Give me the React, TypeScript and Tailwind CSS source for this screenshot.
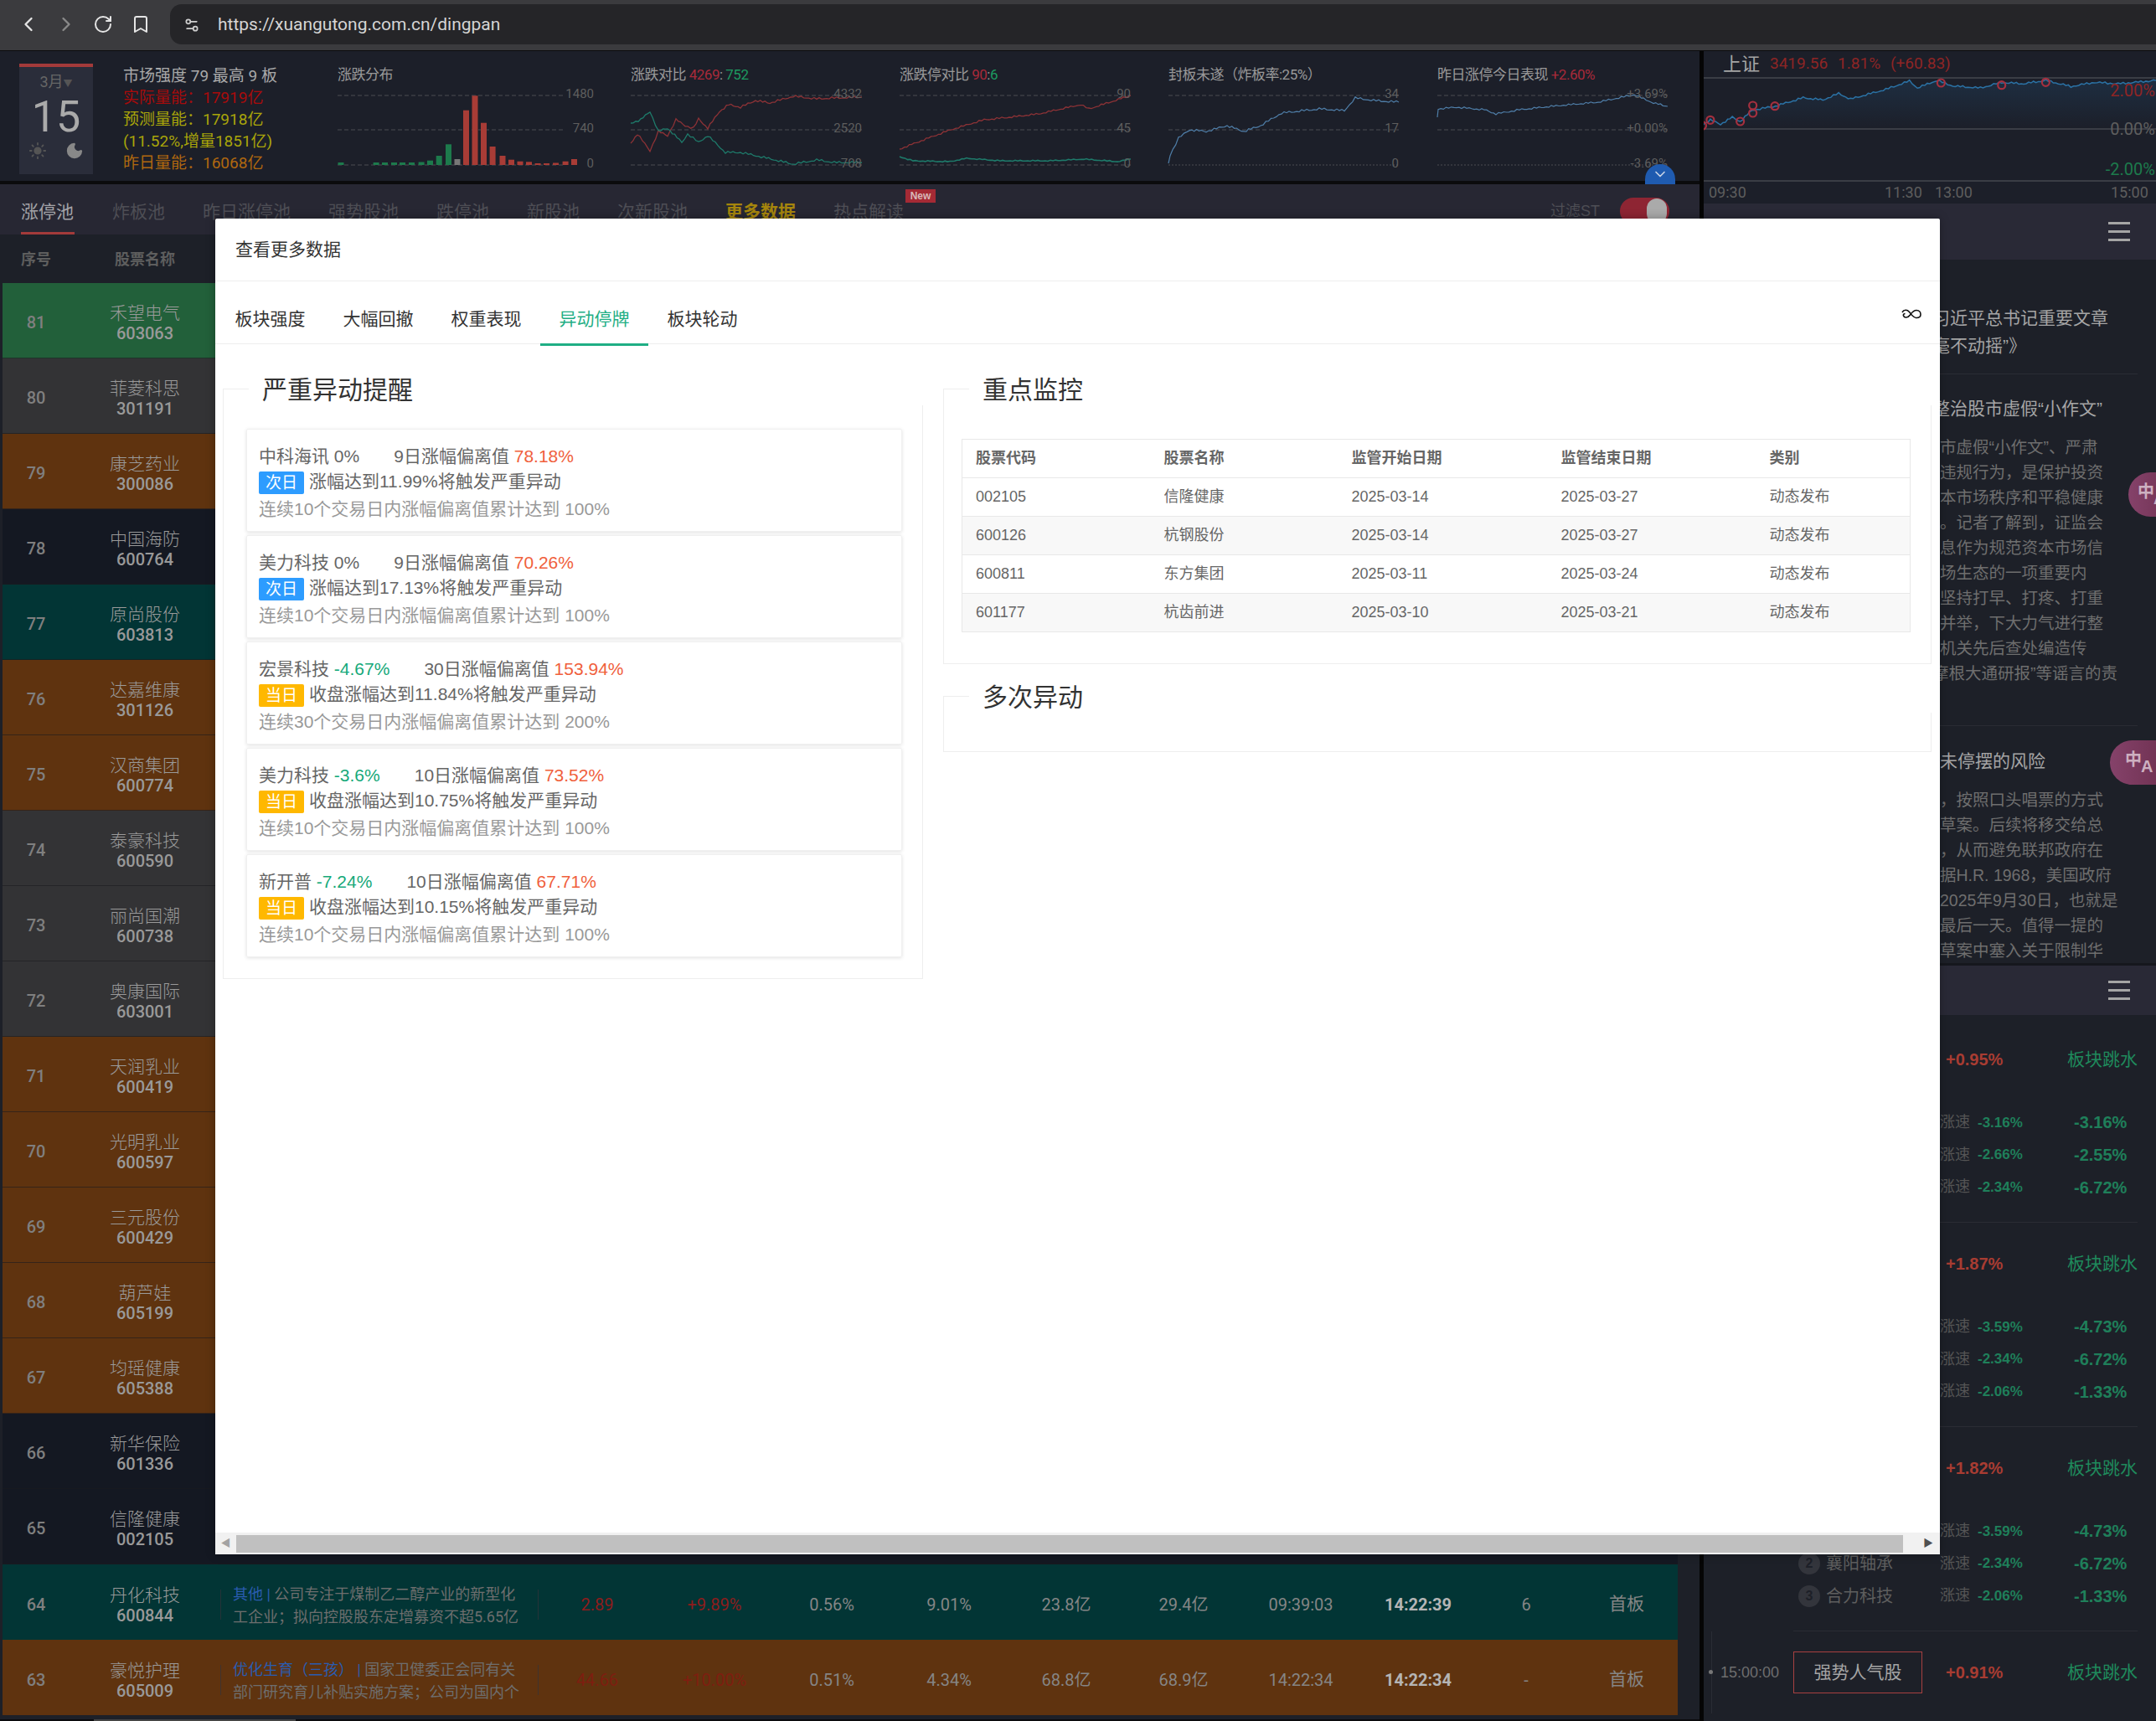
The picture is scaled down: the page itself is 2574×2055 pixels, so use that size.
import { ChevronLeft, ChevronRight, RotateCw, Bookmark, Settings2, Sun, Moon, ChevronDown } from 'lucide-react'

// page font: latin first, then CJK
const sans = "font-['Liberation_Sans','Noto_Sans_CJK_SC',sans-serif]"
const din = "font-['Roboto','Noto_Sans_CJK_SC',sans-serif]"

const rowBg: Record<string, string> = {
  green: 'bg-[#22603a]',
  grey: 'bg-[#333335]',
  brown: 'bg-[#5f330f]',
  navy: 'bg-[#141822]',
  teal: 'bg-[#023535]',
}

const stocks = [
  [81, '禾望电气', '603063', 'green'],
  [80, '菲菱科思', '301191', 'grey'],
  [79, '康芝药业', '300086', 'brown'],
  [78, '中国海防', '600764', 'navy'],
  [77, '原尚股份', '603813', 'teal'],
  [76, '达嘉维康', '301126', 'brown'],
  [75, '汉商集团', '600774', 'brown'],
  [74, '泰豪科技', '600590', 'grey'],
  [73, '丽尚国潮', '600738', 'grey'],
  [72, '奥康国际', '603001', 'grey'],
  [71, '天润乳业', '600419', 'brown'],
  [70, '光明乳业', '600597', 'brown'],
  [69, '三元股份', '600429', 'brown'],
  [68, '葫芦娃', '605199', 'brown'],
  [67, '均瑶健康', '605388', 'brown'],
  [66, '新华保险', '601336', 'navy'],
  [65, '信隆健康', '002105', 'navy'],
] as const

// turn a few hand read points into a jagged intraday line
function jag(pts: number[][], amp = 1.2) {
  const out: string[] = []
  let n = 0
  for (let i = 0; i < pts.length - 1; i++) {
    const [x0, y0] = pts[i]
    const [x1, y1] = pts[i + 1]
    const steps = Math.max(1, Math.round((x1 - x0) / 3))
    for (let s = 0; s < steps; s++) {
      const t = s / steps
      const noise = Math.sin(n * 2.7) * amp + Math.sin(n * 0.9) * amp * 0.6
      out.push(`${(x0 + (x1 - x0) * t).toFixed(1)},${(y0 + (y1 - y0) * t + noise).toFixed(1)}`)
      n++
    }
  }
  const last = pts[pts.length - 1]
  out.push(`${last[0]},${last[1]}`)
  return out.join(' ')
}

const bars: [number, number, string][] = [
  [0.5, 94, '#1d7a4c'], [42.6, 94, '#1d7a4c'], [53, 94, '#1d7a4c'], [64, 94, '#1d7a4c'], [74, 94, '#1d7a4c'], [85, 94, '#1d7a4c'],
  [96.6, 93.5, '#1d7a4c'], [107, 91.7, '#1d7a4c'], [117.7, 86, '#1d7a4c'], [129, 72.3, '#1d7a4c'], [139.5, 90, '#777'],
  [150, 31.7, '#a83c36'], [160.5, 14.3, '#a83c36'], [171, 46.7, '#a83c36'], [181.6, 75, '#a83c36'], [193.5, 86, '#a83c36'],
  [204, 90.7, '#a83c36'], [214.5, 92.7, '#a83c36'], [225, 93.3, '#a83c36'], [235.6, 95, '#a83c36'], [246, 95, '#a83c36'],
  [257, 94.5, '#a83c36'], [268.6, 92.7, '#a83c36'], [279, 90, '#a83c36'],
]

function Chart({ width, title, labels, labelEnd, dashEnd, bottomDots, children }: {
  width: number
  title: React.ReactNode
  labels: string[]
  labelEnd: number
  dashEnd: number
  bottomDots?: boolean
  children: React.ReactNode
}) {
  const ys = [14, 55, 97]
  return (
    <div className="shrink-0" style={{ width }}>
      <div className="h-[22px] text-[17px] leading-[22px] tracking-[-0.5px] text-[#999] whitespace-nowrap">{title}</div>
      <svg width={width} height={108} className="block overflow-visible">
        {ys.map((y, i) => (
          <line key={y} x1={0} x2={dashEnd} y1={y} y2={y} stroke="#4a4c52" strokeDasharray={bottomDots && i === 2 ? '2 2' : '5 3'} />
        ))}
        {children}
        {labels.map((l, i) => (
          <text key={l} x={labelEnd} y={ys[i] + 3} textAnchor="end" fontSize={15} fill="#5e5e5e" fontFamily="Roboto, sans-serif">{l}</text>
        ))}
      </svg>
    </div>
  )
}

function Header() {
  return (
    <div className={`h-[155px] bg-[#1c1f29] flex pl-[23px] ${din}`}>
      <div className="w-[88px] h-[132px] mt-[15px] border-t-4 border-[#a33a3a] bg-[#2a2d3a] flex flex-col items-center shrink-0">
        <div className="mt-[6px] text-[18px] leading-[24px] text-[#666]">3月<span className="text-[11px] text-[#555]">▼</span></div>
        <div className="text-[52px] leading-[54px] text-[#aaa]">15</div>
        <div className="mt-[2px] flex gap-[22px] items-center">
          <Sun size={22} className="text-[#555] fill-[#555]" />
          <Moon size={22} className="text-[#888] fill-[#888]" />
        </div>
      </div>
      <div className="ml-[36px] w-[220px] shrink-0 pt-[17px] text-[19px] leading-[26px] whitespace-nowrap mr-[36px]">
        <div className="text-[#a9a9a9]">市场强度 79 最高 9 板</div>
        <div className="text-[#a80b0b]">实际量能：17919亿</div>
        <div className="text-[#a9a50a]">预测量能：17918亿</div>
        <div className="text-[#a9a50a]">(11.52%,增量1851亿)</div>
        <div className="text-[#b0680f]">昨日量能：16068亿</div>
      </div>
      <div className="flex pt-[17px]">
        <Chart width={350} title="涨跌分布" labels={['1480', '740', '0']} labelEnd={306} dashEnd={272}>
          {bars.map(([x, top, c]) => (
            <rect key={x} x={x} y={top} width={7} height={97 - top} fill={c} />
          ))}
        </Chart>
        <Chart
          width={321}
          title={<>涨跌对比 <span className="text-[#a82a3a]">4269</span>: <span className="text-[#1d9a60]">752</span></>}
          labels={['4332', '2520', '708']}
          labelEnd={276}
          dashEnd={276}
        >
          <polyline fill="none" stroke="#8c3236" strokeWidth={1.3} points={jag([[0, 71], [8, 60], [23, 80], [33, 57], [44, 62], [54, 43], [65, 50], [75, 53], [81, 42], [92, 53], [106, 33], [117, 25], [131, 28], [149, 20], [166, 23], [194, 15], [222, 18], [243, 17], [276, 16]], 1)} />
          <polyline fill="none" stroke="#1e7a6a" strokeWidth={1.3} points={jag([[0, 47], [12, 43], [23, 33], [33, 57], [44, 53], [61, 70], [68, 60], [81, 70], [92, 62], [113, 82], [131, 82], [159, 88], [194, 96], [222, 91], [243, 94], [276, 94]], 1)} />
        </Chart>
        <Chart
          width={321}
          title={<>涨跌停对比 <span className="text-[#a82a3a]">90</span>:<span className="text-[#1d9a60]">6</span></>}
          labels={['90', '45', '0']}
          labelEnd={276}
          dashEnd={276}
        >
          <polyline fill="none" stroke="#8c3236" strokeWidth={1.3} points={jag([[0, 78], [26, 68], [61, 55], [101, 43], [131, 40], [166, 36], [216, 25], [226, 30], [276, 14]], 0.8)} />
          <polyline fill="none" stroke="#1e7a6a" strokeWidth={1.6} points={jag([[0, 87], [16, 92], [60, 93], [80, 89], [120, 92], [180, 92], [220, 90], [260, 93], [276, 90]], 0.5)} />
        </Chart>
        <Chart width={321} title="封板未遂（炸板率:25%）" labels={['34', '17', '0']} labelEnd={275} dashEnd={275} bottomDots>
          <polyline fill="none" stroke="#4f7ea8" strokeWidth={1.2} points={jag([[0, 95], [2, 85], [12, 65], [25, 55], [45, 57], [70, 50], [90, 57], [110, 50], [135, 35], [180, 30], [210, 32], [223, 17], [245, 20], [275, 22]], 1)} />
        </Chart>
        <Chart
          width={275}
          title={<>昨日涨停今日表现 <span className="text-[#a82a3a]">+2.60%</span></>}
          labels={['+3.69%', '+0.00%', '-3.69%']}
          labelEnd={275}
          dashEnd={275}
          bottomDots
        >
          <polyline fill="none" stroke="#4f7ea8" strokeWidth={1.2} points={jag([[0, 40], [1, 30], [23, 28], [56, 31], [70, 36], [98, 31], [136, 27], [192, 22], [235, 13], [258, 23], [275, 27]], 0.8)} />
        </Chart>
      </div>
    </div>
  )
}

function NavTabs() {
  return (
    <div className={`h-[60px] bg-[#272733] relative flex items-start pl-[25px] pt-[17px] gap-[45px] text-[21px] leading-[32px] text-[#4e4e55] whitespace-nowrap ${sans}`}>
      <div className="text-[#a3a3a8] relative w-[64px]">
        涨停池
        <div className="absolute left-0 w-[64px] h-[3px] top-[40px] bg-[#a33a3a]" />
      </div>
      <div>炸板池</div>
      <div>昨日涨停池</div>
      <div>强势股池</div>
      <div>跌停池</div>
      <div>新股池</div>
      <div>次新股池</div>
      <div className="font-bold text-[#a5850c]">更多数据</div>
      <div className="relative">
        热点解读
        <span className="absolute left-[86px] top-[-11px] w-[36px] h-[16px] bg-[#a52a35] text-[12px] leading-[16px] text-center font-bold text-[#d8b8b8]">New</span>
      </div>
      <div className="ml-auto mr-[36px] flex items-center gap-[24px] -mt-[15px] pt-[14px]">
        <span className="text-[18px] text-[#4e4e55]">过滤ST</span>
        <span className="w-[59px] h-[32px] rounded-full bg-[#8e2533] flex items-center justify-end pr-[3px]">
          <span className="w-[24px] h-[30px] rounded-full bg-[#aaa]" />
        </span>
      </div>
      <div className="absolute left-[1964px] top-[-24px] w-[36px] h-[24px] rounded-t-full bg-[#1f5bb0] flex items-center justify-center">
        <ChevronDown size={20} className="text-[#c9d4e6]" />
      </div>
    </div>
  )
}

function NameCell({ name, code }: { name: string; code: string }) {
  return (
    <div className="w-[180px] text-center">
      <div className="text-[21px] leading-[26px] text-[#9a9a9a] font-['Noto_Sans_CJK_SC',sans-serif] font-light">{name}</div>
      <div className="text-[20px] leading-[26px] font-medium text-[#999]">{code}</div>
    </div>
  )
}

function ExtraRow({ num, name, code, bg, tag, desc, desc2, cells, priceClass }: {
  num: number
  name: string
  code: string
  bg: string
  tag: string
  desc: string
  desc2: string
  cells: string[]
  priceClass: string
}) {
  return (
    <div className={`h-[90px] pt-[5px] ${bg} flex items-center whitespace-nowrap text-[#858585] text-[20px] ${din}`}>
      <div className="w-[80px] text-center font-medium text-[#7f7f7f]">{num}</div>
      <NameCell name={name} code={code} />
      <div className="w-[380px] h-[36px] border-x border-[#33333a]/70 relative">
        <div className="absolute left-[14px] top-[-8px] text-[18px] leading-[27px] text-[#6e6e6e]">
          <div><span className="text-[#2a5cb0]">{tag} | </span>{desc}</div>
          <div>{desc2}</div>
        </div>
      </div>
      {cells.map((c, i) => (
        <div
          key={i}
          className={
            (i === 8 ? 'w-[118px]' : i === 9 ? 'w-[122px]' : 'w-[140px]') +
            ' text-center ' +
            (i < 2 ? priceClass : i === 7 ? 'font-bold text-[#b5b5b5]' : i === 9 ? 'text-[21px]' : '')
          }
        >
          {c}
        </div>
      ))}
    </div>
  )
}

function MainColumn() {
  return (
    <div className="w-[2029px] shrink-0 flex flex-col bg-[#1d2028]">
      <Header />
      <div className="h-[4px] bg-[#0b0b0d]" />
      <NavTabs />
      <div className={`h-[58px] pt-[3px] bg-[#1d2028] flex items-center pl-[3px] text-[18px] font-bold text-[#5e5e5e] ${sans}`}>
        <div className="w-[80px] pl-[22px]">序号</div>
        <div className="w-[180px] text-center">股票名称</div>
      </div>
      <div className="pl-[3px] w-[2003px]">
        {stocks.map(([num, name, code, color]) => (
          <div key={num} className={`h-[90px] pt-[5px] ${rowBg[color]} flex items-center border-b border-[#1b1b1e]/60 ${din}`}>
            <div className="w-[80px] text-center text-[20px] font-medium text-[#7f7f7f]">{num}</div>
            <NameCell name={name} code={code} />
          </div>
        ))}
        <ExtraRow
          num={64}
          name="丹化科技"
          code="600844"
          bg={rowBg.teal}
          tag="其他"
          desc="公司专注于煤制乙二醇产业的新型化"
          desc2="工企业；拟向控股股东定增募资不超5.65亿"
          priceClass="text-[#8e1c1c]"
          cells={['2.89', '+9.89%', '0.56%', '9.01%', '23.8亿', '29.4亿', '09:39:03', '14:22:39', '6', '首板']}
        />
        <ExtraRow
          num={63}
          name="豪悦护理"
          code="605009"
          bg={rowBg.brown}
          tag="优化生育（三孩）"
          desc="国家卫健委正会同有关"
          desc2="部门研究育儿补贴实施方案；公司为国内个"
          priceClass="text-[#7e1e10]"
          cells={['44.66', '+10.00%', '0.51%', '4.34%', '68.8亿', '68.9亿', '14:22:34', '14:22:34', '-', '首板']}
        />
      </div>
      <div className="h-[5px]" />
      <div className="h-[2px] bg-[#0b0b0d] pl-[112px]">
        <div className="w-[241px] h-[2px] bg-[#444]" />
      </div>
    </div>
  )
}

const indexRaw = [[990, 450], [1002, 430], [1015, 445], [1030, 420], [1040, 435], [1055, 395], [1085, 380], [1120, 350], [1145, 358], [1165, 335], [1180, 355], [1225, 320], [1255, 290], [1265, 315], [1290, 288], [1310, 308], [1345, 315], [1372, 295], [1400, 300], [1428, 288], [1460, 310], [1490, 295], [1520, 300], [1568, 288]]
const indexPts = indexRaw.map(([z, y]) => [z / 1.0638 - 934, y / 3 - 92])
const rings = [[992, 450], [1002, 430], [1040, 435], [1056, 378], [1056, 405], [1084, 380], [1295, 297], [1372, 305], [1428, 295]].map(([z, y]) => [z / 1.0638 - 934, y / 3 - 92])

function IndexPanel() {
  const line = jag(indexPts, 0.9)
  return (
    <div className={`h-[182px] bg-[#1c1f29] ${din}`}>
      <div className="h-[31px] flex items-center pl-[23px] gap-[12px] text-[19px] whitespace-nowrap">
        <span className="text-[22px] text-[#a5a5a5]">上证</span>
        <span className="text-[#8e2525]">3419.56</span>
        <span className="text-[#8e2525]">1.81%</span>
        <span className="text-[#8e2525]">(+60.83)</span>
      </div>
      <svg width={540} height={125} className="block overflow-hidden">
        <defs>
          <linearGradient id="indexFill" x1="0" y1="0" x2="0" y2="1">
            <stop offset="0" stopColor="#1f3a55" stopOpacity="0.55" />
            <stop offset="1" stopColor="#1f3a55" stopOpacity="0" />
          </linearGradient>
        </defs>
        <polygon points={`${line} 540,62 0,62`} fill="url(#indexFill)" />
        <line x1={0} x2={540} y1={1} y2={1} stroke="#3a3d45" strokeWidth={2} />
        <line x1={0} x2={540} y1={62} y2={62} stroke="#3a3d45" strokeWidth={2} />
        <line x1={0} x2={540} y1={124} y2={124} stroke="#3a3d45" strokeWidth={2} />
        <polyline points={line} fill="none" stroke="#2b72a5" strokeWidth={1.5} />
        {rings.map(([x, y]) => (
          <circle key={`${x}-${y}`} cx={x} cy={y} r={4.5} fill="none" stroke="#a5303f" strokeWidth={2.2} />
        ))}
        <text x={539} y={23} textAnchor="end" fontSize={20} fill="#8e2525" fontFamily="Roboto, sans-serif">2.00%</text>
        <text x={539} y={69} textAnchor="end" fontSize={20} fill="#5e5e5e" fontFamily="Roboto, sans-serif">0.00%</text>
        <text x={539} y={117} textAnchor="end" fontSize={20} fill="#1d7a4c" fontFamily="Roboto, sans-serif">-2.00%</text>
      </svg>
      <div className="h-[24px] flex items-center pl-[6px] text-[18px] text-[#5e5e5e]">
        <span className="w-[46px]">09:30</span>
        <span className="ml-[164px] w-[46px]">11:30</span>
        <span className="ml-[14px] w-[46px]">13:00</span>
        <span className="ml-[164px] w-[46px]">15:00</span>
      </div>
    </div>
  )
}

function Hamburger() {
  return (
    <div className="w-[26px] flex flex-col gap-[7px]">
      <span className="h-[3px] bg-[#a5a5a5]" />
      <span className="h-[3px] bg-[#a5a5a5]" />
      <span className="h-[3px] bg-[#a5a5a5]" />
    </div>
  )
}

const bodyA = [
  '市虚假“小作文”、严肃',
  '违规行为，是保护投资',
  '本市场秩序和平稳健康',
  '。记者了解到，证监会',
  '息作为规范资本市场信',
  '场生态的一项重要内',
  '坚持打早、打疼、打重',
  '并举，下大力气进行整',
  '机关先后查处编造传',
]
const bodyB = [
  '，按照口头唱票的方式',
  '草案。后续将移交给总',
  '，从而避免联邦政府在',
  '据H.R. 1968，美国政府',
  '2025年9月30日，也就是',
  '最后一天。值得一提的',
  '草案中塞入关于限制华',
]

function NewsPanel() {
  return (
    <div className={`h-[907px] flex flex-col ${sans}`}>
      <div className="h-[67px] shrink-0 bg-[#292936] flex items-center justify-end pr-[31px]">
        <Hamburger />
      </div>
      <div className="h-[840px] overflow-hidden pl-[273px] whitespace-nowrap text-[#6e6e6e] text-[19.5px] leading-[30px]">
        <div className="w-[245px] pt-[53px] pb-[17px] border-b border-[#2a2c34] text-[21px] leading-[33px] text-[#a5a5a5]">
          <div>习近平总书记重要文章</div>
          <div>毫不动摇”》</div>
        </div>
        <div className="pt-[24px] text-[21px] leading-[33px] text-[#a5a5a5]">整治股市虚假“小作文”</div>
        <div className="mt-[15px] w-[245px] pl-[9px] pb-[47px] border-b border-[#2a2c34]">
          {bodyA.map((t) => (
            <div key={t}>{t}</div>
          ))}
          <div className="-ml-[9px]">摩根大通研报”等谣言的责</div>
        </div>
        <div className="pt-[25px] pl-[9px] text-[21px] leading-[33px] text-[#a5a5a5]">未停摆的风险</div>
        <div className="mt-[15px] pl-[9px]">
          {bodyB.map((t) => (
            <div key={t}>{t}</div>
          ))}
        </div>
      </div>
    </div>
  )
}

function FeedRow({ name, rank, a, b }: { name?: string; rank?: string; a: string; b: string }) {
  return (
    <div className="h-[38.7px] flex items-center whitespace-nowrap">
      <div className="w-[175px] flex items-center text-[20px] text-[#5e5e5e]">
        {name && (
          <>
            <span className="w-[26px] h-[26px] ml-[6px] rounded-full bg-[#33353c] text-[16px] leading-[26px] text-center text-[#1d2028] font-bold">{rank}</span>
            <span className="ml-[7px]">{name}</span>
          </>
        )}
      </div>
      <div className="w-[45px] text-[18px] text-[#555]">涨速</div>
      <div className="w-[115px] text-[17px] font-bold text-[#1f7f5a]">{a}</div>
      <div className="text-[20px] font-bold text-[#1f7f5a]">{b}</div>
    </div>
  )
}

function FeedItem({ pct, rows, time, names }: { pct: string; rows: string[][]; time?: string; names?: boolean }) {
  return (
    <div className="h-[244px] shrink-0 flex">
      <div className="w-[107px] shrink-0 pl-[10px]">
        <div className="h-[98px] border-l border-[#2a2c34] flex items-center pl-[4px] -ml-[1px]">
          {time && (
            <span className="text-[18px] text-[#6e6e6e] -ml-[8px] whitespace-nowrap">
              <span className="inline-block w-[5px] h-[5px] mb-[4px] rounded-full bg-[#777] mr-[9px]" />
              {time}
            </span>
          )}
        </div>
      </div>
      <div className="w-[411px] border-b border-[#2a2c34]">
        <div className="h-[98px] flex items-center">
          <div className="w-[154px] h-[50px] border border-[#a84040] text-[21px] leading-[48px] text-center text-[#a5a5a5]">强势人气股</div>
          <span className="ml-[28px] text-[20px] font-bold text-[#a83c32]">{pct}</span>
          <span className="ml-auto text-[21px] text-[#1f8a5c]">板块跳水</span>
        </div>
        <div className="mt-[7px]">
          {rows.map(([a, b], i) => (
            <FeedRow key={i} a={a} b={b} name={names ? ['', '襄阳轴承', '合力科技'][i] || undefined : undefined} rank={String(i + 1)} />
          ))}
        </div>
      </div>
    </div>
  )
}

function FeedPanel() {
  return (
    <div className={`flex-1 flex flex-col overflow-hidden ${sans}`}>
      <div className="h-[59px] shrink-0 bg-[#292936] flex items-center justify-end pr-[31px]">
        <Hamburger />
      </div>
      <div className="h-[4px] shrink-0" />
      <FeedItem pct="+0.95%" rows={[['-3.16%', '-3.16%'], ['-2.66%', '-2.55%'], ['-2.34%', '-6.72%']]} />
      <FeedItem pct="+1.87%" rows={[['-3.59%', '-4.73%'], ['-2.34%', '-6.72%'], ['-2.06%', '-1.33%']]} />
      <FeedItem names pct="+1.82%" rows={[['-3.59%', '-4.73%'], ['-2.34%', '-6.72%'], ['-2.06%', '-1.33%']]} />
      <FeedItem time="15:00:00" pct="+0.91%" rows={[]} />
    </div>
  )
}

function TranslatePill({ className }: { className: string }) {
  return (
    <div className={`absolute h-[53px] rounded-l-full bg-gradient-to-r from-[#85426a] to-[#6e3050] flex items-center text-[20px] leading-[20px] font-bold text-[#cdb0c0] ${sans} ${className}`}>
      <span className="-mt-[8px]">中</span>
      <span className="mt-[8px] -ml-[1px]">A</span>
    </div>
  )
}

function WarnCard({ name, change, up, days, value, tag, note, rule }: {
  name: string
  change: string
  up?: boolean
  days: string
  value: string
  tag: '次日' | '当日'
  note: string
  rule: string
}) {
  return (
    <div className="h-[123px] border border-[#f0f0f0] shadow-[0_1px_4px_rgba(0,0,0,0.12)] rounded-[2px] pl-[14px] pt-[18px] text-[21px] leading-[30px] text-[#666] whitespace-nowrap">
      <div className="h-[29px] leading-[27px]">
        {name} <span className={up ? 'text-[#16a97a]' : ''}>{change}</span>
        <span className="ml-[41px]">{days}涨幅偏离值 </span>
        <span className="text-[#f0603c]">{value}</span>
      </div>
      <div className="h-[33px] flex items-center">
        <span className={`w-[54px] h-[27px] rounded-[2px] text-center text-[19px] leading-[27px] text-white ${tag === '次日' ? 'bg-[#2d9cff]' : 'bg-[#ffb800]'}`}>{tag}</span>
        <span className="ml-[6px] -mt-[3px]">{note}</span>
      </div>
      <div className="h-[30px] leading-[30px] text-[#999]">{rule}</div>
    </div>
  )
}

const monitors = [
  ['002105', '信隆健康', '2025-03-14', '2025-03-27'],
  ['600126', '杭钢股份', '2025-03-14', '2025-03-27'],
  ['600811', '东方集团', '2025-03-11', '2025-03-24'],
  ['601177', '杭齿前进', '2025-03-10', '2025-03-21'],
]

function Fieldset({ title, width, className, children }: { title: string; width: number; className?: string; children?: React.ReactNode }) {
  return (
    <fieldset className={`border border-[#eeeeee] min-w-0 ${className ?? ''}`} style={{ width }}>
      <legend className="ml-[30px] pl-[16px] h-[40px] w-[calc(100%-29px)] text-[30px] leading-[44px] text-[#333] bg-white">{title}</legend>
      {children}
    </fieldset>
  )
}

function Modal() {
  return (
    <div className={`absolute left-[257px] top-[261px] w-[2059px] h-[1595px] bg-white rounded-[2px] shadow-[0_0_12px_rgba(0,0,0,0.3)] flex flex-col ${sans}`}>
      <div className="h-[75px] shrink-0 border-b border-[#eeeeee] flex items-center pl-[24px] text-[21px] text-[#333]">查看更多数据</div>
      <div className="h-[75px] shrink-0 border-b border-[#eeeeee] flex text-[21px] leading-[89px] text-[#333] pl-[1px]">
        <div className="w-[129px] text-center">板块强度</div>
        <div className="w-[129px] text-center">大幅回撤</div>
        <div className="w-[129px] text-center">权重表现</div>
        <div className="w-[129px] h-[77px] text-center text-[#1fae84] border-b-[3px] border-[#1fae84]">异动停牌</div>
        <div className="w-[129px] text-center">板块轮动</div>
        <div className="ml-auto mr-[22px] mt-[32px]">
          <svg width="24" height="14" viewBox="0 0 24 14" fill="none" stroke="#111" strokeWidth="1.6">
            <path d="M1 5C3 1.5 7 1.5 9.5 4.5 12 7.5 14 11.5 18 11.5 21.5 11.5 23 9.5 23 7.5 23 5 21.5 2.5 18 2.5 14 2.5 12 6 10 8.5 8 11.5 3.5 12 2.5 9 2 7.5 3 6.5 4.5 6.5" />
          </svg>
        </div>
      </div>
      <div className="flex-1 min-h-0 flex items-start pl-[9px] pt-[33px] gap-[24px]">
        <Fieldset title="严重异动提醒" width={836}>
          <div className="pt-[28px] pl-[27px] pr-[24px] pb-[25px] flex flex-col gap-[4px]">
            <WarnCard name="中科海讯" change="0%" days="9日" value="78.18%" tag="次日" note="涨幅达到11.99%将触发严重异动" rule="连续10个交易日内涨幅偏离值累计达到 100%" />
            <WarnCard name="美力科技" change="0%" days="9日" value="70.26%" tag="次日" note="涨幅达到17.13%将触发严重异动" rule="连续10个交易日内涨幅偏离值累计达到 100%" />
            <WarnCard up name="宏景科技" change="-4.67%" days="30日" value="153.94%" tag="当日" note="收盘涨幅达到11.84%将触发严重异动" rule="连续30个交易日内涨幅偏离值累计达到 200%" />
            <WarnCard up name="美力科技" change="-3.6%" days="10日" value="73.52%" tag="当日" note="收盘涨幅达到10.75%将触发严重异动" rule="连续10个交易日内涨幅偏离值累计达到 100%" />
            <WarnCard up name="新开普" change="-7.24%" days="10日" value="67.71%" tag="当日" note="收盘涨幅达到10.15%将触发严重异动" rule="连续10个交易日内涨幅偏离值累计达到 100%" />
          </div>
        </Fieldset>
        <div className="flex flex-col gap-[18px]">
          <Fieldset title="重点监控" width={1180}>
            <div className="pt-[40px] pl-[21px] pb-[37px]">
              <table className="w-[1133px] table-fixed border border-[#e8e8e8] text-[18px] text-[#666] border-collapse">
                <thead>
                  <tr className="h-[46px] font-bold text-left">
                    <th className="w-[225px] pl-[16px]">股票代码</th>
                    <th className="w-[224px] pl-[16px]">股票名称</th>
                    <th className="w-[250px] pl-[16px]">监管开始日期</th>
                    <th className="w-[249px] pl-[16px]">监管结束日期</th>
                    <th className="pl-[16px]">类别</th>
                  </tr>
                </thead>
                <tbody>
                  {monitors.map((m, i) => (
                    <tr key={m[0]} className={`h-[46px] border-t border-[#e8e8e8] ${i % 2 ? 'bg-[#f8f8f8]' : ''}`}>
                      {m.map((c) => (
                        <td key={c} className="pl-[16px]">{c}</td>
                      ))}
                      <td className="pl-[16px]">动态发布</td>
                    </tr>
                  ))}
                </tbody>
              </table>
            </div>
          </Fieldset>
          <Fieldset title="多次异动" width={1180} className="h-[87px]" />
        </div>
      </div>
      <div className="h-[26px] shrink-0 bg-[#f1f1f1] flex items-center">
        <span className="w-[25px] text-center text-[12px] text-[#a3a3a3]">◀</span>
        <div className="w-[1990px] h-[21px] bg-[#c0c0c0]" />
        <span className="flex-1 pl-[16px] text-center text-[12px] text-[#505050]">▶</span>
      </div>
    </div>
  )
}

export default function App() {
  return (
    <div className="relative w-[2574px] h-[2055px] overflow-hidden bg-[#0b0b0d]">
      <div className={`h-[60px] bg-[#3b3b3e] flex items-center pt-[5px] pb-[7px] ${din}`}>
        <div className="w-[203px] shrink-0 flex items-center pl-[20px] text-[#e5e5e5]">
          <ChevronLeft size={28} />
          <ChevronRight size={28} className="ml-[17px] text-[#8a8a8a]" />
          <RotateCw size={24} className="ml-[18px]" />
          <Bookmark size={24} className="ml-[21px]" />
        </div>
        <div className="flex-1 h-[48px] bg-[#252528] rounded-tl-[14px] rounded-bl-[14px] flex items-center pl-[16px] pt-[2px] text-[21px] text-[#d5d5d5]">
          <Settings2 size={20} className="text-[#cfcfcf]" />
          <span className="ml-[21px]">https://xuangutong.com.cn/dingpan</span>
        </div>
      </div>
      <div className="h-[1px] bg-[#0b0b0d]" />
      <div className="flex h-[1994px]">
        <MainColumn />
        <div className="w-[5px] shrink-0 bg-[#050505]" />
        <div className="flex-1 flex flex-col bg-[#1d2028]">
          <IndexPanel />
          <NewsPanel />
          <div className="h-[3px] shrink-0 bg-[#15171d]" />
          <FeedPanel />
        </div>
      </div>
      <TranslatePill className="left-[2541px] top-[564px] w-[60px] pl-[11px]" />
      <TranslatePill className="left-[2519px] top-[884px] w-[70px] pl-[18px]" />
      <Modal />
    </div>
  )
}
